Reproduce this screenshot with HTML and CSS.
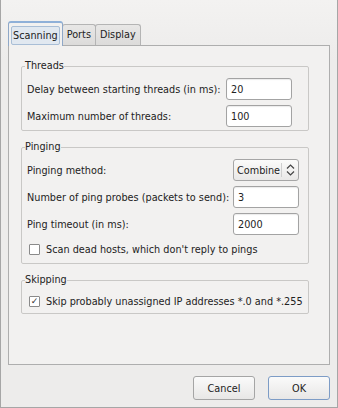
FILE: index.html
```html
<!DOCTYPE html>
<html lang="en">
<head>
    <meta charset="UTF-8">
    <title>Preferences</title>
    <link rel="stylesheet" href="styles.css">
</head>
<body>

<div class="window">
    <div class="tabs">
        <div class="tab active"><span class="focus">Scanning</span></div>
        <div class="tab">Ports</div>
        <div class="tab">Display</div>
    </div>

    <div class="pane">
        <fieldset class="group threads">
            <legend>Threads</legend>
            <div class="row">
                <label>Delay between starting threads (in ms):</label>
                <input type="text" class="field w66" value="20">
            </div>
            <div class="row">
                <label>Maximum number of threads:</label>
                <input type="text" class="field w66" value="100">
            </div>
        </fieldset>

        <fieldset class="group pinging">
            <legend>Pinging</legend>
            <div class="row">
                <label>Pinging method:</label>
                <div class="combo"><span class="combo-text">Combine</span><span class="combo-arrow"><svg width="9" height="12" viewBox="0 0 9 12"><path d="M1 4.5 L4.5 1 L8 4.5 M1 7.5 L4.5 11 L8 7.5" fill="none" stroke="#444" stroke-width="1.2"/></svg></span></div>
            </div>
            <div class="row">
                <label>Number of ping probes (packets to send):</label>
                <input type="text" class="field w66" value="3">
            </div>
            <div class="row">
                <label>Ping timeout (in ms):</label>
                <input type="text" class="field w66" value="2000">
            </div>
            <div class="check">
                <span class="box"></span>
                <span>Scan dead hosts, which don't reply to pings</span>
            </div>
        </fieldset>

        <fieldset class="group skipping">
            <legend>Skipping</legend>
            <div class="check">
                <span class="box">&#10003;</span>
                <span>Skip probably unassigned IP addresses *.0 and *.255</span>
            </div>
        </fieldset>
    </div>

    <div class="buttons">
        <button type="button" class="btn">Cancel</button>
        <button type="button" class="btn default">OK</button>
    </div>
</div>

</body>
</html>
```

FILE: styles.css
```css
body {
    margin: 0;
    padding: 0;
    font-family: "DejaVu Sans", sans-serif;
    font-size: 9.7px;
    color: #222;
}

.window {
    width: 338px;
    height: 408px;
    box-sizing: border-box;
    border: 1px solid #a6a6a6;
    border-top: none;
    background: linear-gradient(to bottom, #f3f2f1, #edeceb 60px);
    overflow: hidden;
}

.tabs {
    display: flex;
    align-items: flex-end;
    padding: 21px 0 0 7px;
    height: 45px;
    box-sizing: border-box;
    white-space: nowrap;
}

.tab {
    height: 21px;
    line-height: 20px;
    padding: 0 4px;
    border: 1px solid #b4b4b4;
    border-bottom: none;
    border-radius: 3px 3px 0 0;
    background: linear-gradient(to bottom, #e8e7e6, #dcdbda);
    box-sizing: border-box;
    margin-right: -1px;
}

.tab.active {
    height: 25px;
    padding: 3px 2px 0 2px;
    background: #f2f1f0;
    border-color: #8fa8c8;
    border-top: 2px solid #8fb0d8;
    position: relative;
    z-index: 1;
    margin-bottom: -1px;
}

.focus {
    display: block;
    height: 19px;
    line-height: 18px;
    padding: 0 1px;
    border: 1px solid #a9bed6;
    border-radius: 2px;
    background: #e1e8f0;
    box-sizing: border-box;
}

.pane {
    margin: 0 7px;
    height: 320px;
    box-sizing: border-box;
    border: 1px solid #aeaeae;
    background: #f2f1f0;
    padding: 13px 20px 0 12px;
    white-space: nowrap;
}

.group {
    margin: 0;
    padding: 0 0 3px 5px;
    border: 1px solid #c9c8c6;
    border-radius: 2px;
    min-width: 0;
}

.group legend {
    padding: 0;
    margin-left: -2px;
    height: 14px;
    line-height: 14px;
}

.pinging {
    margin-top: 9px;
    padding-right: 9px;
    padding-bottom: 7px;
}

.skipping {
    margin-top: 9px;
    padding-bottom: 5px;
}

.row {
    display: flex;
    align-items: center;
    justify-content: space-between;
    margin-top: 5px;
}

.row label {
    flex-shrink: 0;
}

.threads .row {
    padding-right: 16px;
}

.field {
    height: 22px;
    box-sizing: border-box;
    border: 1px solid #a3a3a3;
    border-radius: 3px;
    background: #fff;
    font-family: "DejaVu Sans", sans-serif;
    font-size: 9.7px;
    color: #222;
    padding: 0 4px;
    outline: none;
    box-shadow: inset 0 1px 1px rgba(0, 0, 0, 0.08);
}

.w66 {
    width: 66px;
}

.combo {
    display: flex;
    align-items: center;
    width: 66px;
    height: 22px;
    box-sizing: border-box;
    border: 1px solid #a6a6a6;
    border-radius: 3px;
    background: linear-gradient(to bottom, #fbfbfa, #e9e8e7);
    overflow: hidden;
}

.combo-text {
    flex: 1;
    padding-left: 3px;
    overflow: hidden;
}

.combo-arrow {
    flex-shrink: 0;
    width: 16px;
    height: 14px;
    border-left: 1px solid #cfcfcf;
    display: flex;
    align-items: center;
    justify-content: center;
}

.check {
    display: flex;
    align-items: center;
    margin-top: 7px;
    padding-left: 2px;
    height: 14px;
}

.box {
    flex-shrink: 0;
    width: 9px;
    height: 9px;
    border: 1px solid #8a8a8a;
    background: #fff;
    margin-right: 6px;
    font-size: 9px;
    line-height: 9px;
    text-align: center;
    color: #333;
    border-radius: 1px;
}

.buttons {
    display: flex;
    justify-content: flex-end;
    gap: 13px;
    padding: 11px 7px 0 0;
}

.btn {
    width: 62px;
    height: 24px;
    border: 1px solid #a5a5a5;
    border-radius: 3px;
    background: linear-gradient(to bottom, #fafafa, #e8e7e6);
    font-family: "DejaVu Sans", sans-serif;
    font-size: 9.7px;
    color: #222;
}

.btn.default {
    border-color: #7d9cc6;
}
```
